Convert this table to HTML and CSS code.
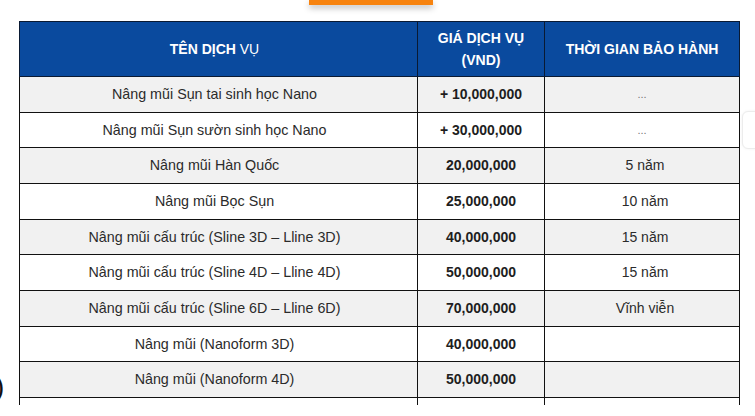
FILE: index.html
```html
<!DOCTYPE html>
<html lang="vi">
<head>
<meta charset="utf-8">
<link rel="stylesheet" href="styles.css">
</head>
<body>
<div class="page">
  <div class="tab-btn"></div>
  <div class="table-clip">
    <table class="price-table">
      <colgroup>
        <col class="c1"><col class="c2"><col class="c3">
      </colgroup>
      <thead>
        <tr>
          <th class="name">TÊN DỊCH <span class="thin">VỤ</span></th>
          <th>GIÁ DỊCH VỤ<br>(VND)</th>
          <th>THỜI GIAN BẢO HÀNH</th>
        </tr>
      </thead>
      <tbody>
        <tr><td class="name">Nâng mũi Sụn tai sinh học Nano</td><td class="price">+ 10,000,000</td><td class="dots">...</td></tr>
        <tr><td class="name">Nâng mũi Sụn sườn sinh học Nano</td><td class="price">+ 30,000,000</td><td class="dots">...</td></tr>
        <tr><td class="name">Nâng mũi Hàn Quốc</td><td class="price">20,000,000</td><td class="warranty">5 năm</td></tr>
        <tr><td class="name">Nâng mũi Bọc Sụn</td><td class="price">25,000,000</td><td class="warranty">10 năm</td></tr>
        <tr><td class="name">Nâng mũi cấu trúc (Sline 3D – Lline 3D)</td><td class="price">40,000,000</td><td class="warranty">15 năm</td></tr>
        <tr><td class="name">Nâng mũi cấu trúc (Sline 4D – Lline 4D)</td><td class="price">50,000,000</td><td class="warranty">15 năm</td></tr>
        <tr><td class="name">Nâng mũi cấu trúc (Sline 6D – Lline 6D)</td><td class="price">70,000,000</td><td class="warranty">Vĩnh viễn</td></tr>
        <tr><td class="name">Nâng mũi (Nanoform 3D)</td><td class="price">40,000,000</td><td></td></tr>
        <tr><td class="name">Nâng mũi (Nanoform 4D)</td><td class="price">50,000,000</td><td></td></tr>
        <tr><td></td><td class="price"></td><td></td></tr>
      </tbody>
    </table>
  </div>
  <span class="stray">)</span>
  <div class="float-btn"></div>
</div>
</body>
</html>
```

FILE: styles.css
```css
html, body {
  margin: 0;
  padding: 0;
  background: #fff;
}

.page {
  position: relative;
  width: 755px;
  height: 416px;
  overflow: hidden;
  font-family: "Liberation Sans", Arial, sans-serif;
}

.tab-btn {
  margin-left: 309px;
  width: 124px;
  height: 5px;
  background: #f7830f;
  box-shadow: 0 3px 6px rgba(0, 0, 0, 0.28);
}

.table-clip {
  margin-top: 16px;
  margin-left: 19px;
  width: 722px;
  height: 384px;
  overflow: hidden;
}

.price-table {
  border-collapse: collapse;
  width: 720px;
  table-layout: fixed;
}

.c1 { width: 398px; }
.c2 { width: 127px; }
.c3 { width: 195px; }

.price-table th {
  background: #0a4a9e;
  color: #fff;
  font-size: 14px;
  font-weight: bold;
  line-height: 22px;
  height: 44px;
  padding: 5px 6px;
  border: 1px solid #0a1a33;
  text-align: center;
  vertical-align: middle;
}

.price-table th .thin {
  font-weight: normal;
}

.price-table td {
  font-size: 14px;
  color: #2b2b2b;
  line-height: 20.67px;
  padding: 7px 8px;
  border: 1px solid #111;
  text-align: center;
  vertical-align: middle;
}

.price-table .name {
  padding-left: 6px;
  padding-right: 14px;
}

.price-table td.name {
  font-size: 14.3px;
}

.price-table td.warranty {
  padding-left: 12px;
  padding-right: 6px;
}

.price-table tbody tr:nth-child(odd) td {
  background: #f1f1f1;
}

.price-table td.price {
  font-weight: bold;
  color: #1e1e1e;
}

.price-table td.dots {
  font-size: 11px;
  color: #777;
}

.stray {
  position: absolute;
  left: -5px;
  top: 371px;
  font-size: 28px;
  line-height: 32px;
  color: #111;
}

.float-btn {
  position: absolute;
  left: 742px;
  top: 111px;
  width: 24px;
  height: 36px;
  border: 1px solid #ececec;
  border-radius: 6px;
  box-shadow: 0 0 3px rgba(0, 0, 0, 0.06);
  background: #fff;
}
```
